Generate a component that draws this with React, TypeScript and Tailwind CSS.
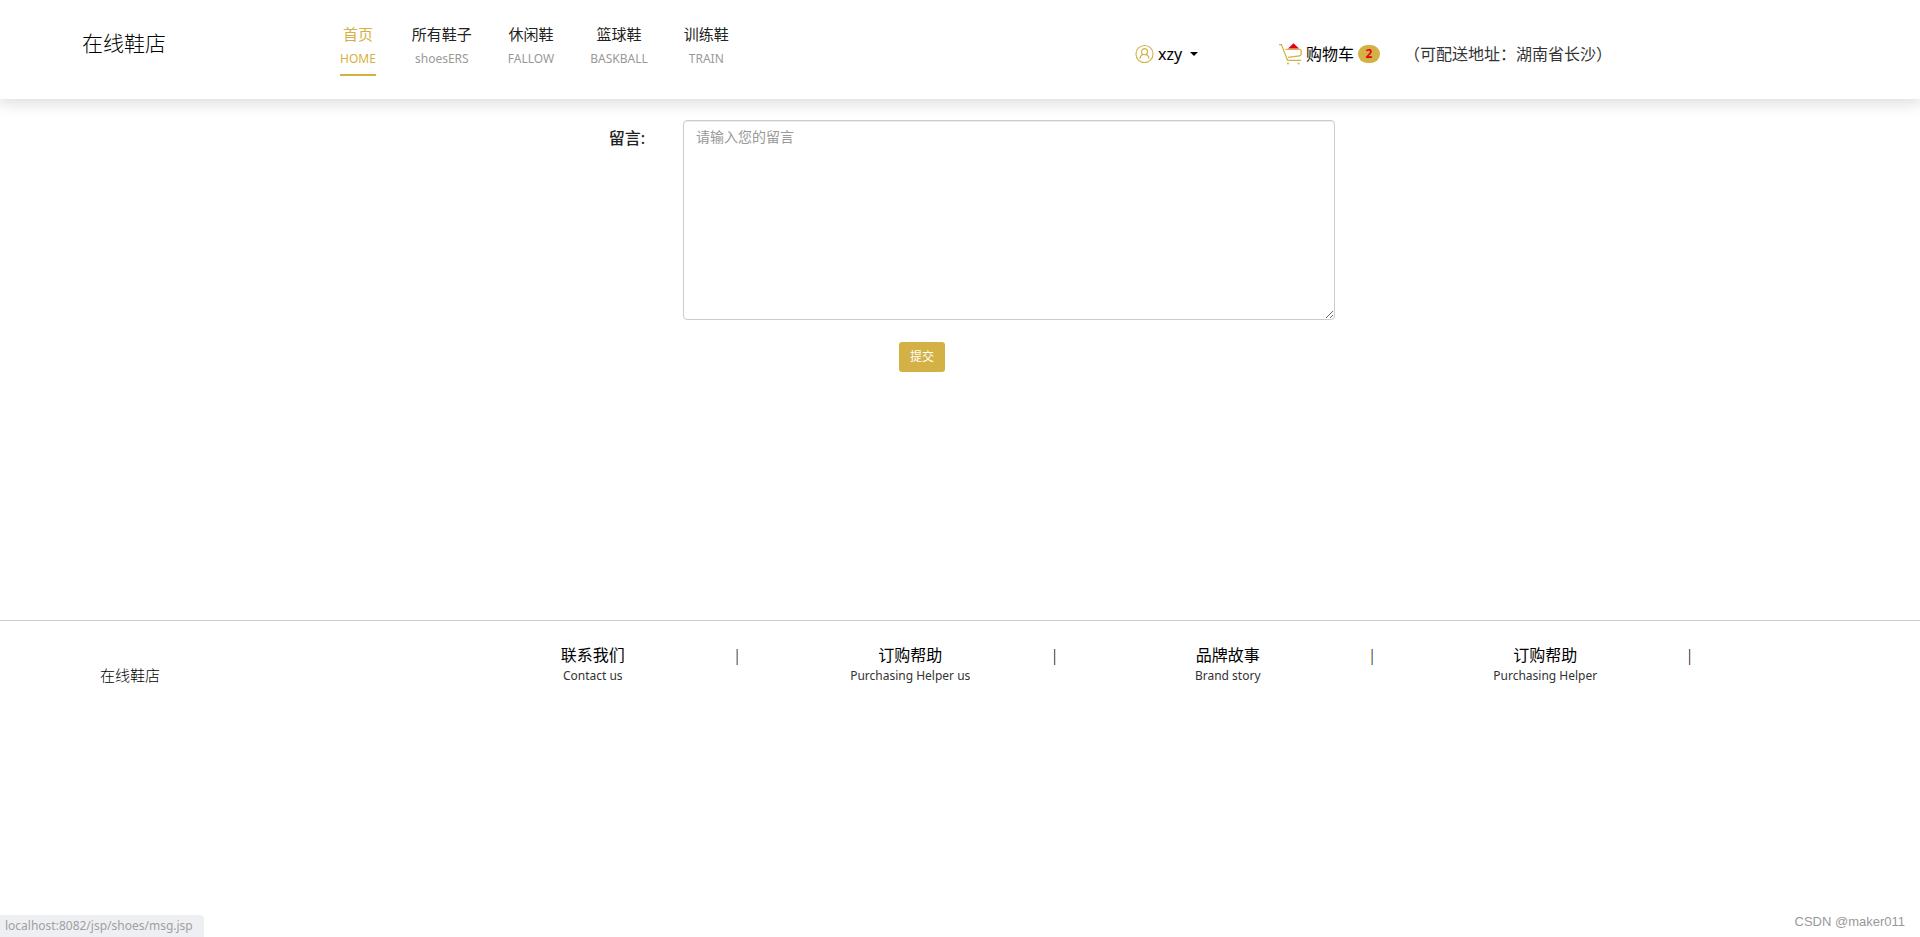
import { useState } from 'react';

const navItems = [
  { id: 'home', title: '首页', sub: 'HOME' },
  { id: 'all', title: '所有鞋子', sub: 'shoesERS' },
  { id: 'casual', title: '休闲鞋', sub: 'FALLOW' },
  { id: 'basketball', title: '篮球鞋', sub: 'BASKBALL' },
  { id: 'train', title: '训练鞋', sub: 'TRAIN' },
];

const footerItems = [
  { id: 'contact', title: '联系我们', sub: 'Contact us' },
  { id: 'order', title: '订购帮助', sub: 'Purchasing Helper us' },
  { id: 'brand', title: '品牌故事', sub: 'Brand story' },
  { id: 'help', title: '订购帮助', sub: 'Purchasing Helper' },
];

function UserIcon() {
  return (
    <svg width="19" height="20" viewBox="0 0 20 20" fill="none" stroke="#d4b144" strokeWidth="1.2">
      <circle cx="10" cy="10" r="9" />
      <circle cx="10" cy="7.6" r="3.2" />
      <path d="M5.2 14.8c.3-2.4 1.7-3.9 3.2-4.4M14.8 14.8c-.3-2.4-1.7-3.9-3.2-4.4" />
    </svg>
  );
}

function CartIcon() {
  return (
    <svg width="23" height="22" viewBox="0 0 23 22" fill="none" stroke="#d4b144" strokeWidth="1.3">
      <path d="M0 1.6h2.4l6.2 15.8h13.6" />
      <path d="M6.4 6.4h14c1 0 1.7.7 1.7 1.6v3c0 1-.6 1.7-1.6 1.8L9 14.4" />
      <path d="M9 5.6 14.5.2 20 5.6z" fill="#e60012" stroke="none" />
      <circle cx="9" cy="20.4" r="1" fill="#d4b144" stroke="none" />
      <circle cx="19.6" cy="20.4" r="1" fill="#d4b144" stroke="none" />
    </svg>
  );
}

function Header() {
  const [active, setActive] = useState('home');

  return (
    <header className="grid h-[99px] grid-cols-[340fr_795fr_785fr] bg-white shadow-[0_2px_14px_2px_rgba(50,30,35,0.16)]">
      <a href="#" className="pt-[27px] pl-[82px] text-[21px] leading-8 font-light text-black">
        在线鞋店
      </a>
      <nav className="flex items-start gap-9 pt-[23px]">
        {navItems.map((item) => (
          <a
            key={item.id}
            href="#"
            onClick={() => setActive(item.id)}
            className={`flex flex-col items-center gap-1 border-b-2 pb-[5px] whitespace-nowrap ${
              active === item.id ? 'border-[#d4b144] text-[#d4b144]' : 'border-transparent text-[#222]'
            }`}
          >
            <span className="text-[15px] leading-[22px]">{item.title}</span>
            <span className={`text-xs leading-5 ${active === item.id ? '' : 'text-[#999]'}`}>{item.sub}</span>
          </a>
        ))}
      </nav>
      <div className="flex items-start pt-[42px] text-base leading-6 whitespace-nowrap text-black">
        <button className="flex w-36 items-center">
          <UserIcon />
          <span className="ml-1">xzy</span>
          <span className="ml-2 border-x-4 border-t-4 border-x-transparent border-t-black" />
        </button>
        <a href="#" className="flex items-center">
          <CartIcon />
          <span className="ml-1">购物车</span>
          <span className="ml-1 flex h-[18px] w-[22px] items-center justify-center rounded-full bg-[#d4b144] text-xs font-bold text-[#e60012]">
            2
          </span>
        </a>
        <span className="ml-6 text-[#333]">（可配送地址：湖南省长沙）</span>
      </div>
    </header>
  );
}

function MessageForm() {
  return (
    <form className="grid grid-cols-[683fr_652fr_585fr] pt-[21px]" onSubmit={(e) => e.preventDefault()}>
      <label htmlFor="message" className="pt-[6px] pr-[38px] text-right text-base leading-6 font-medium text-[#222]">
        留言:
      </label>
      <textarea
        id="message"
        placeholder="请输入您的留言"
        className="h-[200px] resize rounded-[4px] border border-[#ccc] bg-white px-3 py-[6px] text-sm leading-5 text-[#555] shadow-[inset_0_1px_1px_rgba(0,0,0,0.075)] outline-none placeholder:text-[#999]"
      />
      <div className="col-start-2 pt-[22px] pl-[216px]">
        <button
          type="submit"
          className="block h-[30px] rounded-[3px] bg-[#d4b144] px-[11px] text-xs text-white"
        >
          提交
        </button>
      </div>
    </form>
  );
}

function Footer() {
  return (
    <footer className="grid grid-cols-[434fr_1270fr_216fr] border-t border-[#ccc] pt-6">
      <div className="pt-5 pl-[100px] text-[15px] leading-5 font-light text-black">在线鞋店</div>
      <ul className="grid grid-cols-4">
        {footerItems.map((item) => (
          <li key={item.id} className="grid grid-cols-[1fr_auto_1fr] px-[10px] whitespace-nowrap">
            <a href="#" className="col-start-2 flex flex-col items-center text-black">
              <span className="text-base leading-5">{item.title}</span>
              <span className="text-xs leading-[22px] text-[#333]">{item.sub}</span>
            </a>
            <span className="justify-self-end text-base leading-5 font-light text-black">|</span>
          </li>
        ))}
      </ul>
    </footer>
  );
}

export default function App() {
  return (
    <div className="relative flex min-h-screen flex-col bg-white font-['Noto_Sans','Noto_Sans_CJK_SC',sans-serif]">
      <Header />
      <main className="min-h-[521px]">
        <MessageForm />
      </main>
      <Footer />

      {/* browser status text */}
      <div className="absolute bottom-0 left-0 rounded-tr-[4px] bg-[#eeeff3] pr-[11px] pl-[5px] text-xs leading-[22px] text-[#a0a0a0]">
        localhost:8082/jsp/shoes/msg.jsp
      </div>
      <div className="absolute right-[15px] bottom-[5px] font-['Liberation_Sans',sans-serif] text-[13px] leading-5 text-[#999]">
        CSDN @maker011
      </div>
    </div>
  );
}
